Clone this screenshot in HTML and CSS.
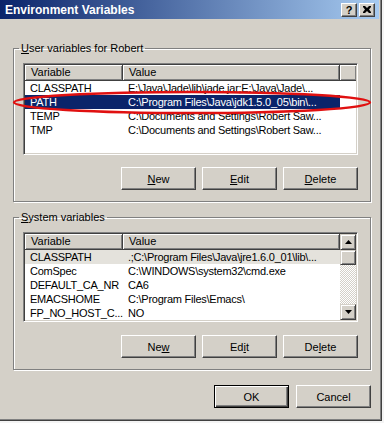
FILE: index.html
```html
<!DOCTYPE html>
<html lang="en">
<head>
    <meta charset="UTF-8">
    <meta name="viewport" content="width=device-width, initial-scale=1.0">
    <title>Environment Variables</title>
    <link rel="stylesheet" href="styles.css">
</head>
<body>
    <div class="window">
        <div class="titlebar">
            <span class="title">Environment Variables</span>
            <div class="caption-btns">
                <span class="cap-btn help">?</span>
                <span class="cap-btn close">
                    <svg width="8" height="7" viewBox="0 0 8 7"><path d="M0 0h2l2 2 2-2h2v1L6 3.5 8 6v1H6L4 5 2 7H0V6l2-2.5L0 1z" fill="#000"/></svg>
                </span>
            </div>
        </div>

        <div class="client">
            <fieldset class="group">
                <legend><u>U</u>ser variables for Robert</legend>
                <div class="listview">
                    <div class="lv-main">
                        <div class="lv-head">
                            <span class="hcell">Variable</span>
                            <span class="hcell">Value</span>
                            <span class="hcell filler"></span>
                        </div>
                        <div class="lv-row"><span>CLASSPATH</span><span>E:\Java\Jade\lib\jade.jar;E:\Java\Jade\...</span></div>
                        <div class="lv-row selected"><span>PATH</span><span>C:\Program Files\Java\jdk1.5.0_05\bin\...</span></div>
                        <div class="lv-row"><span>TEMP</span><span>C:\Documents and Settings\Robert Saw...</span></div>
                        <div class="lv-row"><span>TMP</span><span>C:\Documents and Settings\Robert Saw...</span></div>
                    </div>
                </div>
                <div class="btn-row">
                    <button><u>N</u>ew</button>
                    <button><u>E</u>dit</button>
                    <button><u>D</u>elete</button>
                </div>
            </fieldset>

            <fieldset class="group second">
                <legend><u>S</u>ystem variables</legend>
                <div class="listview">
                    <div class="lv-main">
                        <div class="lv-head">
                            <span class="hcell">Variable</span>
                            <span class="hcell">Value</span>
                        </div>
                        <div class="lv-row inactive"><span>CLASSPATH</span><span>.;C:\Program Files\Java\jre1.6.0_01\lib\...</span></div>
                        <div class="lv-row"><span>ComSpec</span><span>C:\WINDOWS\system32\cmd.exe</span></div>
                        <div class="lv-row"><span>DEFAULT_CA_NR</span><span>CA6</span></div>
                        <div class="lv-row"><span>EMACSHOME</span><span>C:\Program Files\Emacs\</span></div>
                        <div class="lv-row"><span>FP_NO_HOST_C...</span><span>NO</span></div>
                    </div>
                    <div class="scrollbar">
                        <span class="sb-btn"><svg width="7" height="4" viewBox="0 0 7 4"><path d="M3.5 0L7 4H0z" fill="#000"/></svg></span>
                        <span class="sb-btn thumb"></span>
                        <span class="sb-track"></span>
                        <span class="sb-btn"><svg width="7" height="4" viewBox="0 0 7 4"><path d="M0 0h7L3.5 4z" fill="#000"/></svg></span>
                    </div>
                </div>
                <div class="btn-row">
                    <button>Ne<u>w</u></button>
                    <button>Ed<u>i</u>t</button>
                    <button>De<u>l</u>ete</button>
                </div>
            </fieldset>

            <div class="dlg-btns">
                <button class="default">OK</button>
                <button>Cancel</button>
            </div>
        </div>

        <!-- red marker someone drew round the PATH row -->
        <svg class="marker" width="382" height="421">
            <ellipse cx="192" cy="102.5" rx="178" ry="10.5" fill="none" stroke="#e01010" stroke-width="2.5"/>
        </svg>
    </div>
</body>
</html>
```

FILE: styles.css
```css
body {
    margin: 0;
    background-color: #f4f4f4;
    font-family: "Liberation Sans", Arial, sans-serif;
    font-size: 11px;
    color: #000;
}
.window {
    position: relative;
    box-sizing: border-box;
    width: 382px;
    height: 421px;
    background-color: #d4d0c8;
    border-right: 1px solid #404040;
    border-bottom: 1px solid #404040;
    box-shadow: inset -1px -1px 0 #808080;
}
.titlebar {
    height: 19px;
    margin-right: 2px;
    display: flex;
    align-items: center;
    justify-content: space-between;
    background: linear-gradient(to right, #0a246a, #a6caf0);
    padding-left: 5px;
}
.title {
    color: white;
    font-weight: bold;
    font-size: 12px;
}
.caption-btns {
    display: flex;
    gap: 2px;
    padding-right: 4px;
}
.cap-btn {
    box-sizing: border-box;
    width: 16px;
    height: 14px;
    display: flex;
    align-items: center;
    justify-content: center;
    background-color: #d4d0c8;
    border: 1px solid;
    border-color: #fff #404040 #404040 #fff;
    box-shadow: inset -1px -1px 0 #808080;
    font-weight: bold;
    font-size: 11px;
}
.client {
    padding: 23px 10px 0 13px;
}
.group {
    margin: 0;
    padding: 8px 12px 11px 9px;
    border: 1px solid #808080;
    box-shadow: inset 1px 1px 0 #fff, 1px 1px 0 #fff;
    min-width: 0;
}
.group legend {
    padding: 0 2px;
    margin-left: -4px;
    line-height: 13px;
}
.group.second {
    margin-top: 9px;
}
.listview {
    display: flex;
    height: 92px;
    box-sizing: border-box;
    background-color: white;
    border: 1px solid;
    border-color: #808080 #fff #fff #808080;
    box-shadow: inset 1px 1px 0 #404040, inset -1px -1px 0 #d4d0c8;
    padding: 1px;
}
.second .listview {
    height: 90px;
}
.lv-main {
    flex: 1;
    overflow: hidden;
}
.lv-head {
    display: grid;
    grid-template-columns: 98px 217px 1fr;
    height: 16px;
}
.hcell {
    box-sizing: border-box;
    background-color: #d4d0c8;
    border-right: 1px solid #404040;
    border-bottom: 1px solid #404040;
    box-shadow: inset 1px 1px 0 #fff, inset -1px -1px 0 #808080;
    padding-left: 6px;
    line-height: 15px;
    white-space: nowrap;
}
.hcell.filler {
    border-right: none;
}
.lv-row {
    display: grid;
    grid-template-columns: 98px 217px;
    height: 14px;
    line-height: 14px;
    white-space: nowrap;
    letter-spacing: -0.25px;
}
.lv-row span {
    overflow: hidden;
    padding-left: 5px;
}
.lv-row.selected span {
    background-color: #0a246a;
    color: white;
}
.lv-row.inactive span {
    background-color: #e4e2dc;
}
.scrollbar {
    width: 16px;
    display: flex;
    flex-direction: column;
}
.sb-btn {
    box-sizing: border-box;
    height: 16px;
    display: flex;
    align-items: center;
    justify-content: center;
    background-color: #d4d0c8;
    border: 1px solid;
    border-color: #d4d0c8 #404040 #404040 #d4d0c8;
    box-shadow: inset 1px 1px 0 #fff, inset -1px -1px 0 #808080;
}
.sb-btn.thumb {
    height: 15px;
}
.sb-track {
    flex: 1;
    background: repeating-conic-gradient(#fff 0 25%, #d4d0c8 0 50%) 0 0 / 2px 2px;
}
.btn-row, .dlg-btns {
    display: flex;
    justify-content: flex-end;
    gap: 6px;
}
.btn-row {
    margin-top: 12px;
}
.second .btn-row {
    margin-top: 13px;
}
.dlg-btns {
    margin-top: 15px;
    gap: 7px;
}
button {
    box-sizing: border-box;
    width: 75px;
    height: 23px;
    padding: 0;
    font-family: inherit;
    font-size: 11px;
    color: #000;
    background-color: #d4d0c8;
    border: 1px solid;
    border-color: #fff #404040 #404040 #fff;
    box-shadow: inset -1px -1px 0 #808080;
    border-radius: 0;
}
button.default {
    border: 1px solid #000;
    box-shadow: inset 1px 1px 0 #fff, inset -1px -1px 0 #404040, inset -2px -2px 0 #808080;
}
.marker {
    position: absolute;
    top: 0;
    left: 0;
    pointer-events: none;
}
```
